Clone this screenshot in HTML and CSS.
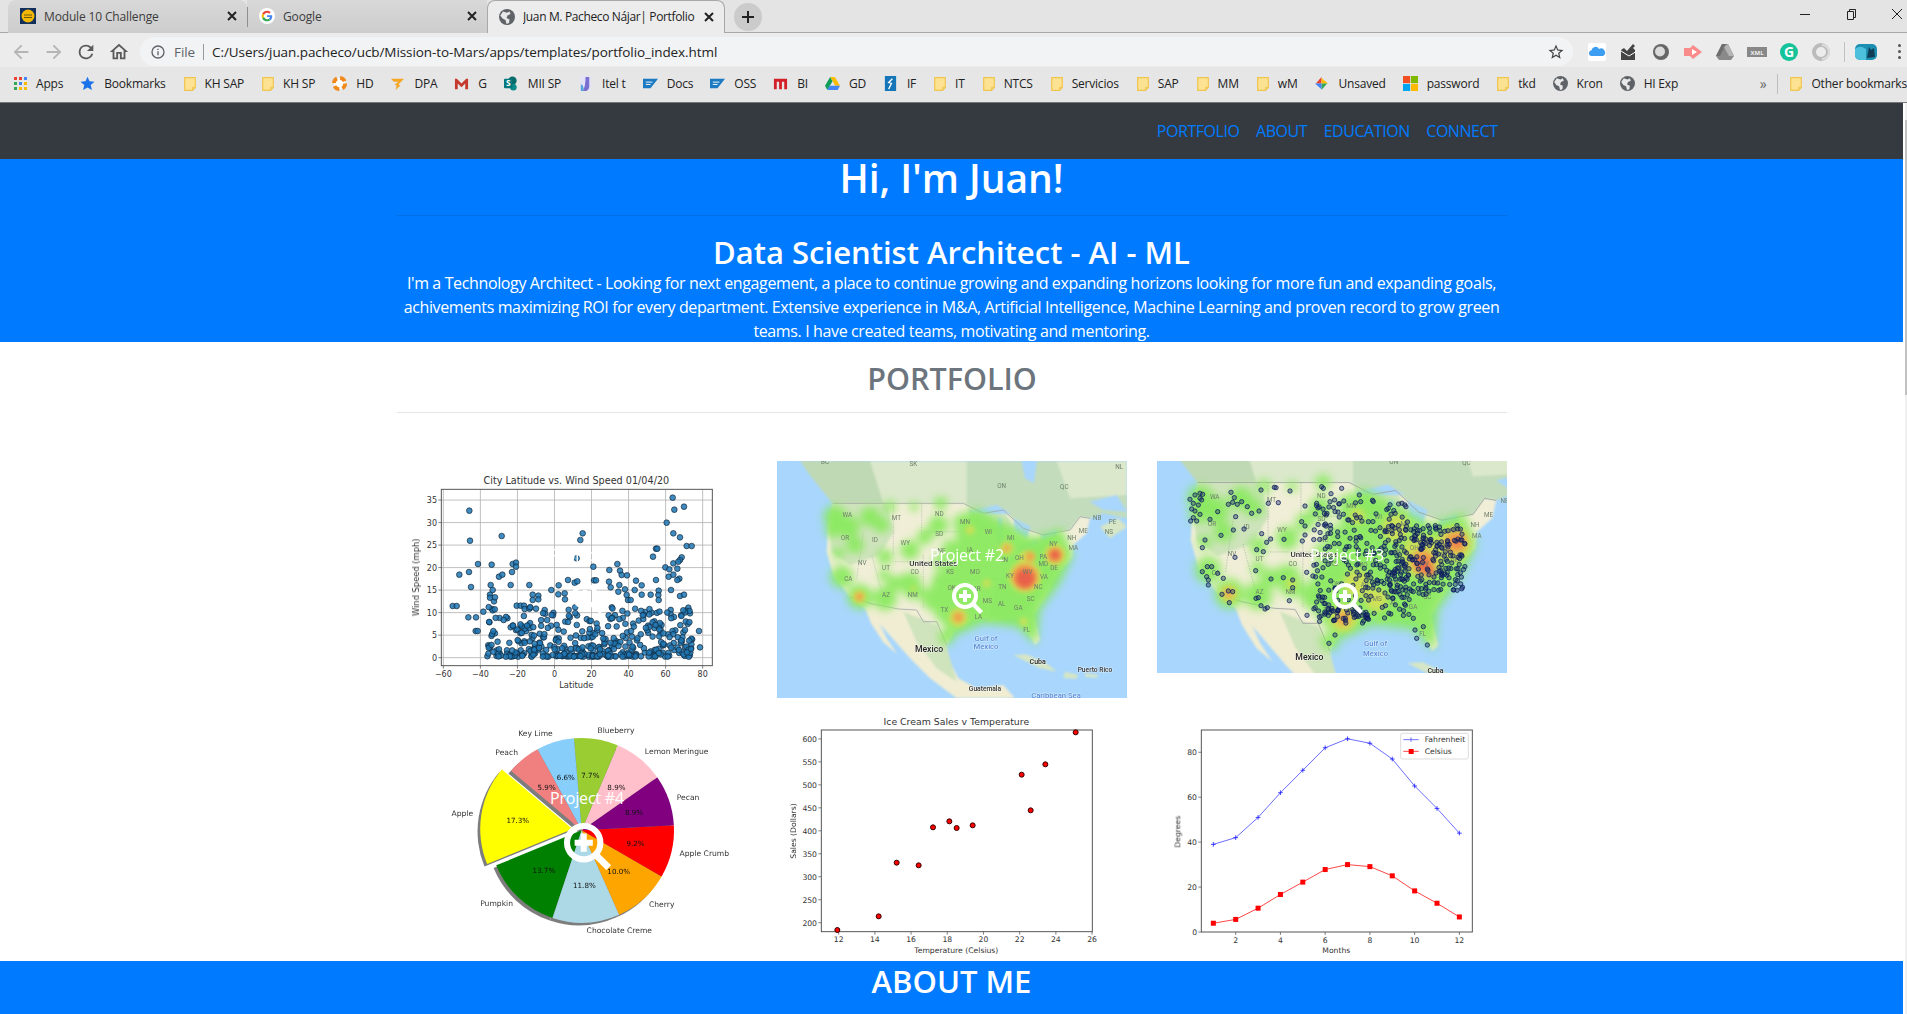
FILE: index.html
```html
<!DOCTYPE html>
<html lang="en">
<head>
  <meta charset="UTF-8">
  <title>Juan M. Pacheco Nájar| Portfolio</title>
  <link rel="stylesheet" href="styles.css">
</head>
<body>
  <svg class="sprites" aria-hidden="true">
    <symbol id="folder" viewBox="0 0 12 14"><path d="M.7.7h10.6v9.8L8.6 13.3H.7z" fill="#fde293" stroke="#f0c54f" stroke-width="1.2"/><path d="M8.6 13v-2.6h2.6" fill="none" stroke="#f0c54f"/></symbol>
    <symbol id="globe" viewBox="0 0 16 16"><circle cx="8" cy="8" r="8" fill="#5f6368"/><path d="M4 2.5l4 1.2 2.5-1.2 1 2.5-3 1.5-1 2.5 3 1.5-.5 3.5-2.5 1-1-4-3-1.5-2.2-3z" fill="#e8e8e8"/></symbol>
    <symbol id="close" viewBox="0 0 10 10"><path d="M1 1l8 8M9 1l-8 8" stroke="#222" stroke-width="2" fill="none"/></symbol>
    <symbol id="lens" viewBox="0 0 31 31"><circle cx="13" cy="13" r="11" fill="none" stroke="#fff" stroke-width="4"/><path d="M13 7v12M7 13h12" stroke="#fff" stroke-width="4" fill="none"/><path d="M21 21l8.5 8.5" stroke="#fff" stroke-width="4.4" fill="none"/></symbol>
  </svg>

  <div class="tabstrip">
    <div class="tab">
      <svg class="favicon" viewBox="0 0 16 16"><rect width="16" height="16" fill="#12305c"/><circle cx="8" cy="8" r="6.5" fill="#f2b705"/><path d="M4 7h8M4 9.5h8" stroke="#6b5a10"/></svg>
      <span class="tab-title">Module 10 Challenge</span>
      <svg class="tab-close"><use href="#close"/></svg>
    </div>
    <div class="tab tab-second">
      <svg class="favicon" viewBox="0 0 48 48"><circle cx="24" cy="24" r="24" fill="#fff"/><path fill="#ea4335" d="M24 14.5c2.6 0 4.7.9 6.4 2.5l4.7-4.7C32.2 9.6 28.500 8 24 8c-6.300 0-11.700 3.600-14.300 8.900l5.500 4.300c1.300-3.900 4.900-6.700 8.800-6.700z"/><path fill="#4285f4" d="M39.600 24.400c0-1.200-.1-2.100-.3-3H24v5.900h8.900c-.4 2.200-1.600 3.900-3.400 5.100l5.300 4.100c3.100-2.900 4.800-7.100 4.800-12.100z"/><path fill="#fbbc05" d="M15.200 27c-.3-1-.5-2-.5-3s.2-2 .5-3l-5.500-4.200C8.600 18.900 8 21.400 8 24s.6 5.100 1.700 7.200z"/><path fill="#34a853" d="M24 40c4.300 0 8-1.400 10.800-3.900l-5.300-4.100c-1.500 1-3.300 1.600-5.500 1.600-4 0-7.500-2.700-8.800-6.500l-5.500 4.200C12.300 36.500 17.700 40 24 40z"/></svg>
      <span class="tab-title">Google</span>
      <svg class="tab-close"><use href="#close"/></svg>
    </div>
    <div class="tab tab-active">
      <svg class="favicon"><use href="#globe"/></svg>
      <span class="tab-title">Juan M. Pacheco Nájar| Portfolio</span>
      <svg class="tab-close"><use href="#close"/></svg>
    </div>
    <div class="new-tab"><svg viewBox="0 0 12 12"><path d="M6 0v12M0 6h12" stroke="#222" stroke-width="2"/></svg></div>
    <div class="window-buttons">
      <svg viewBox="0 0 12 12"><path d="M1 6.500h10" stroke="#222"/></svg>
      <svg viewBox="0 0 12 12"><path d="M2.500 3.500h6v8h-6zM4.500 3.500V1.500h6v8H8.500" stroke="#222" fill="none"/></svg>
      <svg viewBox="0 0 12 12"><path d="M1 1l10 10M11 1L1 11" stroke="#222"/></svg>
    </div>
  </div>

  <div class="toolbar">
    <div class="nav-buttons">
      <svg class="off" viewBox="0 0 24 24"><path d="M20 11H7.830l5.590-5.590L12 4l-8 8 8 8 1.410-1.410L7.830 13H20z"/></svg>
      <svg class="off" viewBox="0 0 24 24"><path d="M12 4l-1.410 1.410L16.170 11H4v2h12.170l-5.580 5.590L12 20l8-8z"/></svg>
      <svg viewBox="0 0 24 24"><path d="M17.650 6.350A7.960 7.960 0 0012 4a8 8 0 100 16c3.730 0 6.840-2.550 7.730-6h-2.080A6 6 0 1112 6c1.660 0 3.140.690 4.220 1.780L13 11h7V4z"/></svg>
      <svg viewBox="0 0 24 24"><path d="M12 5.690l5 4.500V18h-2v-6H9v6H7v-7.810zM12 3L2 12h3v8h6v-6h2v6h6v-8h3z"/></svg>
    </div>
    <div class="omnibox">
      <svg class="info" viewBox="0 0 24 24"><path d="M11 7h2v2h-2zm0 4h2v6h-2zm1-9a10 10 0 100 20 10 10 0 000-20zm0 18a8 8 0 110-16 8 8 0 010 16z"/></svg>
      <span class="scheme">File</span>
      <span class="url">C:/Users/juan.pacheco/ucb/Mission-to-Mars/apps/templates/portfolio_index.html</span>
      <svg class="star" viewBox="0 0 24 24"><path d="M22 9.240l-7.190-.620L12 2 9.190 8.630 2 9.240l5.460 4.730L5.820 21 12 17.270 18.180 21l-1.630-7.030zM12 15.400l-3.760 2.270 1-4.280-3.320-2.880 4.380-.380L12 6.100l1.710 4.040 4.380.380-3.320 2.880 1 4.280z"/></svg>
    </div>
    <div class="extensions">
      <svg viewBox="0 0 20 20"><rect x="1" y="1" width="18" height="18" rx="2" fill="#fff"/><path d="M4 14a3 3 0 01.500-5.800 4 4 0 017.500-1.200 3.500 3.500 0 014 7z" fill="#3d9df0"/></svg>
      <svg viewBox="0 0 20 20"><path d="M2 8l3-2 3 3 6-7 2 2-2 2 2 2v10H2z" fill="#444"/><path d="M2 9l8 5 8-5" stroke="#fff" fill="none"/></svg>
      <svg viewBox="0 0 20 20"><circle cx="10" cy="10" r="8" fill="#666"/><circle cx="9" cy="9.500" r="5" fill="#dcdcdc"/></svg>
      <svg viewBox="0 0 20 20"><path d="M1 6h6l3-3 9 7-9 7-3-3H1z" fill="#f98b8b"/><path d="M9 7l5 3-5 3z" fill="#fff"/></svg>
      <svg viewBox="0 0 20 20"><path d="M7 2h6l6 12-3 4H4l-3-4z" fill="#8a8a8a"/><path d="M7 2h4l-6 12H1z" fill="#6e6e6e"/><path d="M13 2l6 12h-5L9 5z" fill="#b5b5b5"/></svg>
      <svg viewBox="0 0 20 20"><rect y="5" width="20" height="10" fill="#888"/><text x="10" y="12.500" class="ext-text">XML</text></svg>
      <svg viewBox="0 0 20 20"><circle cx="10" cy="10" r="9" fill="#15c39a"/><text x="10" y="15" class="ext-g">G</text></svg>
      <svg viewBox="0 0 20 20"><circle cx="10" cy="10" r="7" fill="none" stroke="#bbb" stroke-width="4"/><path d="M11 3a7 7 0 010 14" fill="none" stroke="#ddd" stroke-width="2"/></svg>
      <i class="toolbar-sep"></i>
      <svg class="avatar" viewBox="0 0 22 16"><rect width="22" height="16" rx="5" fill="#1c8fb0"/><path d="M0 5c5-4 8-2 11 0v11H5a5 5 0 01-5-5z" fill="#4cc0dd"/><path d="M14 3l2 3 3-2 1 9-8 1z" fill="#103c55"/></svg>
      <div class="dots"><i></i><i></i><i></i></div>
    </div>
  </div>

  <div class="bookmarks">
    <a class="bm"><svg class="apps" viewBox="0 0 13 13"><path fill="#ea4335" d="M0 0h3v3H0zM5 0h3v3H5z"/><path fill="#4285f4" d="M10 0h3v3h-3zM5 5h3v3H5z"/><path fill="#34a853" d="M0 5h3v3H0zM0 10h3v3H0z"/><path fill="#fbbc05" d="M10 5h3v3h-3zM5 10h3v3H5zM10 10h3v3h-3z"/></svg>Apps</a>
    <a class="bm"><svg viewBox="0 0 24 24"><path fill="#1a73e8" d="M12 1l3.200 7.500 8 .7-6 5.300 1.800 8L12 18.300 5 22.500l1.800-8-6-5.300 8-.7z"/></svg>Bookmarks</a>
    <a class="bm"><svg class="fold"><use href="#folder"/></svg>KH SAP</a>
    <a class="bm"><svg class="fold"><use href="#folder"/></svg>KH SP</a>
    <a class="bm"><svg viewBox="0 0 16 16"><circle cx="8" cy="8" r="6" fill="#fff" stroke="#f08a1d" stroke-width="4" stroke-dasharray="6 3.400"/></svg>HD</a>
    <a class="bm"><svg viewBox="0 0 16 16"><path d="M1 3h14L9 9l2 1-5 5 1-5-2-1 4-3H4z" fill="#f5a623"/></svg>DPA</a>
    <a class="bm"><svg viewBox="0 0 16 16"><path d="M1 14V3h2l5 5 5-5h2v11h-3V8L8 12 4 8v6z" fill="#c5392c"/></svg>G</a>
    <a class="bm"><svg viewBox="0 0 16 16"><circle cx="9" cy="5" r="4.500" fill="#0b6a6a"/><circle cx="10" cy="12" r="3.500" fill="#0e8a8a"/><rect y="3" width="9" height="10" rx="1" fill="#03787c"/><text x="4.500" y="11" class="ext-s">S</text></svg>MII SP</a>
    <a class="bm"><svg viewBox="0 0 16 16"><rect x="2" width="12" height="16" fill="#e4e2f4"/><path d="M8 1h4v10c0 2-1 4-3 5H4c3-2 4-7 4-15z" fill="#7a6fd0"/><path d="M3 9c2 0 3 2 3 7H3z" fill="#57a5dd"/></svg>Itel t</a>
    <a class="bm"><svg viewBox="0 0 16 10"><path d="M0 0h16L8 10H0z" fill="#1b7ac2"/><path d="M3 3.500h7M3 6h5" stroke="#fff"/></svg>Docs</a>
    <a class="bm"><svg viewBox="0 0 16 10"><path d="M0 0h16L8 10H0z" fill="#1b7ac2"/><path d="M3 3.500h7M3 6h5" stroke="#fff"/></svg>OSS</a>
    <a class="bm"><svg viewBox="0 0 16 16"><path d="M1 14V3h14v11h-3V6H9.500v8h-3V6H4v8z" fill="#d22128"/></svg>BI</a>
    <a class="bm"><svg viewBox="0 0 16 16"><path d="M5.500 1h5L16 10.500h-5z" fill="#fbbc05"/><path d="M5.500 1L0 10.500 2.500 15 8 5.500z" fill="#0f9d58"/><path d="M2.500 15h11l2.500-4.500H5z" fill="#4285f4"/></svg>GD</a>
    <a class="bm"><svg viewBox="0 0 16 16"><rect x="2" width="12" height="16" fill="#1476b8"/><path d="M10 3L6 7l3 1-3 6" stroke="#fff" fill="none" stroke-width="1.400"/></svg>IF</a>
    <a class="bm"><svg class="fold"><use href="#folder"/></svg>IT</a>
    <a class="bm"><svg class="fold"><use href="#folder"/></svg>NTCS</a>
    <a class="bm"><svg class="fold"><use href="#folder"/></svg>Servicios</a>
    <a class="bm"><svg class="fold"><use href="#folder"/></svg>SAP</a>
    <a class="bm"><svg class="fold"><use href="#folder"/></svg>MM</a>
    <a class="bm"><svg class="fold"><use href="#folder"/></svg>wM</a>
    <a class="bm"><svg viewBox="0 0 16 16"><path d="M8 1v7H2z" fill="#ea4335"/><path d="M15 8H8V2z" fill="#fbbc05"/><path d="M8 15V8h6z" fill="#34a853"/><path d="M1 8h7v6z" fill="#4285f4"/></svg>Unsaved</a>
    <a class="bm"><svg viewBox="0 0 16 16"><path fill="#f25022" d="M0 0h7.600v7.600H0z"/><path fill="#7fba00" d="M8.400 0H16v7.600H8.400z"/><path fill="#00a4ef" d="M0 8.400h7.600V16H0z"/><path fill="#ffb900" d="M8.400 8.400H16V16H8.400z"/></svg>password</a>
    <a class="bm"><svg class="fold"><use href="#folder"/></svg>tkd</a>
    <a class="bm"><svg><use href="#globe"/></svg>Kron</a>
    <a class="bm"><svg><use href="#globe"/></svg>HI Exp</a>
    <span class="bm-more">»</span>
    <i class="bm-sep"></i>
    <a class="bm bm-other"><svg class="fold"><use href="#folder"/></svg>Other bookmarks</a>
  </div>

  <div class="viewport">
    <main class="page">
      <nav class="navbar">
        <div class="container nav-links">
          <a href="#portfolio">PORTFOLIO</a>
          <a href="#about">ABOUT</a>
          <a href="#education">EDUCATION</a>
          <a href="#connect">CONNECT</a>
        </div>
      </nav>

      <header class="hero">
        <div class="container">
          <h1>Hi, I'm Juan!</h1>
          <hr class="hr-dark">
          <h2>Data Scientist Architect - AI - ML</h2>
          <p>I'm a Technology Architect - Looking for next engagement, a place to continue growing and expanding horizons looking for more fun and expanding goals, achivements maximizing ROI for every department. Extensive experience in M&amp;A, Artificial Intelligence, Machine Learning and proven record to grow green teams. I have created teams, motivating and mentoring.</p>
        </div>
      </header>

      <section class="portfolio" id="portfolio">
        <div class="container">
          <h2>PORTFOLIO</h2>
          <hr>
          <div class="grid">
            <div class="project row-one"><div class="shot" id="chart-wind"></div><div class="overlay"><p>Project #1</p><svg><use href="#lens"/></svg></div></div>
            <div class="project row-one"><div class="shot" id="map-heat"></div><div class="overlay"><p>Project #2</p><svg><use href="#lens"/></svg></div></div>
            <div class="project row-one"><div class="shot" id="map-dots"></div><div class="overlay"><p>Project #3</p><svg><use href="#lens"/></svg></div></div>
            <div class="project row-two"><div class="shot" id="chart-pie"></div><div class="overlay"><p>Project #4</p><svg><use href="#lens"/></svg></div></div>
            <div class="project"><div class="shot" id="chart-sales"></div></div>
            <div class="project"><div class="shot" id="chart-temp"></div></div>
          </div>
        </div>
      </section>

      <section class="about" id="about">
        <h2>ABOUT ME</h2>
      </section>
    </main>
    <div class="scrollbar"><i></i></div>
  </div>

  <script src="charts.js"></script>
</body>
</html>
```

FILE: styles.css
```css
* {
  box-sizing: border-box;
}
html, body {
  height: 100%;
}
body {
  margin: 0;
  overflow: hidden;
  font-family: "Open Sans", "Noto Sans", sans-serif;
  font-size: 16px;
  background-color: #fff;
  color: #212529;
}
.sprites {
  display: none;
}

/* browser chrome */
.tabstrip {
  display: flex;
  height: 33px;
  padding-left: 8px;
  background-color: #e4e4e4;
  border-bottom: 1px solid #a8a8a8;
  font-size: 12px;
  letter-spacing: -.15px;
}
.tab {
  display: flex;
  align-items: center;
  width: 239px;
  height: 33px;
  padding: 0 10px 1px 12px;
  background: linear-gradient(#d8d8d8, #cdcdcd);
  border-radius: 8px 8px 0 0;
  color: #3c3c3c;
}
.tab-second {
  width: 240px;
  border-left: 1px solid #8f8f8f;
  border-image: linear-gradient(transparent 8px, #8f8f8f 8px, #8f8f8f 26px, transparent 26px) 1;
  border-radius: 0;
}
.tab-active {
  width: 238px;
  padding-left: 11px;
  background: #ececec;
  border: 1px solid #a8a8a8;
  border-bottom: none;
  color: #222;
  letter-spacing: -.36px;
}
.favicon {
  flex: none;
  width: 16px;
  height: 16px;
  margin-right: 8px;
}
.tab-second .favicon {
  margin-left: -1px;
}
.tab-title {
  flex: 1;
  white-space: nowrap;
  overflow: hidden;
}
.tab-close {
  flex: none;
  width: 10px;
  height: 10px;
}
.new-tab {
  display: flex;
  align-items: center;
  justify-content: center;
  width: 28px;
  height: 28px;
  margin: 3px 0 0 9px;
  background-color: #cbcbcb;
  border-radius: 50%;
}
.new-tab svg {
  width: 12px;
  height: 12px;
}
.window-buttons {
  display: flex;
  gap: 34px;
  margin: 8px 4px 0 auto;
}
.window-buttons svg {
  width: 12px;
  height: 12px;
}

.toolbar {
  display: flex;
  align-items: center;
  height: 34px;
  padding-top: 3px;
  background-color: #ececec;
}
.nav-buttons {
  display: flex;
  flex: none;
  width: 140px;
  padding-left: 10px;
  gap: 10.500px;
}
.nav-buttons svg {
  width: 22px;
  height: 22px;
  fill: #5a5a5a;
}
.nav-buttons .off {
  fill: #b4b4b4;
}
.omnibox {
  display: flex;
  flex: 1;
  align-items: center;
  height: 29px;
  padding: 0 8px 0 10px;
  background-color: #f1f3f4;
  border-radius: 15px;
  font-size: 13.500px;
  letter-spacing: -.08px;
}
.info {
  width: 16px;
  height: 16px;
  margin-right: 8px;
  fill: #5f6368;
}
.scheme {
  padding-right: 8px;
  border-right: 1px solid #9a9a9a;
  color: #5f6368;
  line-height: 16px;
}
.url {
  flex: 1;
  padding-left: 8px;
  color: #222;
  white-space: nowrap;
}
.star {
  width: 18px;
  height: 18px;
  fill: #444;
}
.extensions {
  display: flex;
  flex: none;
  align-items: center;
  width: 334px;
  padding-left: 14px;
  gap: 12px;
}
.extensions > svg {
  width: 20px;
  height: 20px;
}
.ext-text {
  font-size: 6px;
  font-weight: 700;
  fill: #eee;
  text-anchor: middle;
}
.ext-g {
  font-size: 14px;
  font-weight: 700;
  fill: #fff;
  text-anchor: middle;
}
.ext-s {
  font-size: 9px;
  font-weight: 700;
  fill: #fff;
  text-anchor: middle;
}
.toolbar-sep {
  width: 1px;
  height: 20px;
  margin-left: 1px;
  background-color: #c2c2c2;
}
.extensions > .avatar {
  width: 22px;
  height: 16px;
  margin-left: -2px;
}
.dots {
  display: flex;
  flex-direction: column;
  gap: 3px;
  margin-left: 9px;
}
.dots i {
  width: 3px;
  height: 3px;
  background-color: #555;
  border-radius: 50%;
}

.bookmarks {
  display: flex;
  align-items: center;
  height: 36px;
  padding: 0 0 2px 14px;
  background-color: #e6e6e6;
  border-bottom: 1px solid #777;
  font-size: 12px;
  letter-spacing: -.2px;
  color: #222;
  white-space: nowrap;
  overflow: hidden;
}
.bm {
  display: flex;
  flex: none;
  align-items: center;
  gap: 9px;
  margin-right: 17px;
}
.bm svg {
  width: 15px;
  height: 15px;
}
.bm .fold {
  width: 12px;
  height: 14px;
  margin-left: 1px;
}
.bm .apps {
  width: 13px;
  height: 13px;
}
.bm-more {
  margin-left: auto;
  color: #666;
  font-size: 14px;
}
.bm-sep {
  width: 1px;
  height: 20px;
  margin: 0 11px 0 11px;
  background-color: #bdbdbd;
}
.bm-other {
  margin-right: 0;
}

/* page */
.viewport {
  display: flex;
}
.page {
  flex: none;
  width: 1904px;
}
.scrollbar {
  flex: 1;
  margin-left: 1px;
  background-color: #f1f1f1;
  height: 911px;
}
.scrollbar i {
  display: block;
  height: 275px;
  margin-top: 17px;
  background-color: #c1c1c1;
}
.container {
  width: 1110px;
  margin: 0 auto;
}
.navbar {
  height: 56px;
  margin-right: 1px;
  background-color: #343a40;
}
.nav-links {
  display: flex;
  align-items: center;
  justify-content: flex-end;
  height: 100%;
  padding-right: 9px;
  gap: 16.500px;
}
.nav-links a {
  color: #007bff;
  text-decoration: none;
  letter-spacing: -.45px;
}
.hero {
  height: 183px;
  margin-right: 1px;
  background-color: #007bff;
  color: #fff;
  text-align: center;
}
.hero h1 {
  margin: 0 0 8px;
  font-size: 39px;
  font-weight: 600;
  line-height: 37px;
  height: 48px;
}
hr {
  margin: 15px 0 0;
  border: none;
  border-top: 1px solid rgba(0, 0, 0, .1);
}
.hr-dark {
  margin: 0;
}
.hero h2 {
  margin: 18px 0 0;
  font-size: 31px;
  font-weight: 600;
  line-height: 37px;
}
.hero p {
  margin: 0;
  letter-spacing: -.37px;
  line-height: 24px;
}
.portfolio h2 {
  margin: 0;
  padding-top: 17px;
  font-size: 30.500px;
  font-weight: 600;
  line-height: 38px;
  color: #6c757d;
  text-align: center;
}
.grid {
  display: grid;
  grid-template-columns: repeat(3, 350px);
  grid-template-rows: 237px 263px;
  column-gap: 30px;
  align-items: start;
  margin-top: 48px;
}
.project {
  position: relative;
}
.shot svg {
  display: block;
  width: 350px;
  height: auto;
  filter: blur(.35px);
}
.overlay {
  position: absolute;
  left: 0;
  width: 380px;
  color: #fff;
  text-align: center;
  line-height: 24px;
}
.overlay p {
  margin: 0;
  letter-spacing: -.2px;
}
.overlay svg {
  display: block;
  margin-left: auto;
  margin-right: auto;
}
.row-one .overlay {
  top: 82px;
}
.row-one .overlay svg {
  width: 31px;
  height: 31px;
  margin-top: 16px;
}
.row-two .overlay {
  top: 88px;
}
.row-two .overlay svg {
  width: 47px;
  height: 47px;
  margin-top: 13px;
}
.about {
  margin-right: 1px;
  height: 60px;
  padding-top: 1px;
  background-color: #007bff;
}
.about h2 {
  margin: 0;
  font-size: 31px;
  font-weight: 600;
  line-height: 38px;
  color: #fff;
  text-align: center;
}

/* matplotlib charts */
.mpl text {
  font-family: "DejaVu Sans", sans-serif;
  fill: #333;
}
.gmap text {
  font-family: Roboto, sans-serif;
  text-anchor: middle;
}
.gmap .place {
  font-weight: 500;
}
```

FILE: charts.js
```js
// small seeded generator so the dense clouds come out the same on every load
function seeded(s) {
  return () => (s = (s * 16807) % 2147483647) / 2147483647;
}

function svgOpen(cls, viewBox) {
  return `<svg xmlns="http://www.w3.org/2000/svg" class="${cls}" viewBox="${viewBox}">`;
}

function axes(box, xTicks, yTicks, opts) {
  let [l, t, r, b] = box, out = '';
  let size = opts.tickSize;
  if (opts.grid) {
    xTicks.forEach(([x]) => out += `<path d="M${x} ${t}V${b}" stroke="#b0b0b0" stroke-width="2.400"/>`);
    yTicks.forEach(([y]) => out += `<path d="M${l} ${y}H${r}" stroke="#b0b0b0" stroke-width="2.400"/>`);
  }
  xTicks.forEach(([x, label]) => {
    out += `<path d="M${x} ${b}v9" stroke="#444" stroke-width="2"/>`;
    out += `<text x="${x}" y="${b + 9 + size}" font-size="${size}" text-anchor="middle">${label}</text>`;
  });
  yTicks.forEach(([y, label]) => {
    out += `<path d="M${l} ${y}h-9" stroke="#444" stroke-width="2"/>`;
    out += `<text x="${l - 13}" y="${y + size * .37}" font-size="${size}" text-anchor="end">${label}</text>`;
  });
  return out;
}

function frame(box) {
  let [l, t, r, b] = box;
  return `<rect x="${l}" y="${t}" width="${r - l}" height="${b - t}" fill="none" stroke="#555" stroke-width="3"/>`;
}

function drawWind() {
  const box = [124, 88, 937, 617];
  const xTicks = [];
  for (let v = -60; v <= 80; v += 20) xTicks.push([130 + (v + 60) * 5.557, String(v).replace('-', '−')]);
  const yTicks = [];
  for (let v = 0; v <= 35; v += 5) yTicks.push([593 - v * 13.51, v]);

  // points read off the plot, outliers first
  const pts = [[208,152],[210,242],[207,336],[213,381],[205,472],[234,312],[178,344],[158,438],[170,438],[228,472],[227,513],[233,513],[250,455],[305,228],[275,314],[338,312],[348,308],[348,320],[336,336],[297,350],[307,344],[272,375],[332,375],[388,375],[278,390],[270,404],[270,413],[282,424],[285,412],[276,447],[278,451],[398,404],[415,407],[415,418],[398,420],[350,437],[362,437],[372,437],[374,447],[408,446],[434,450],[476,376],[454,390],[475,403],[494,400],[495,418],[504,360],[524,368],[532,364],[530,295],[541,240],[548,220],[580,320],[582,361],[588,361],[628,330],[652,312],[660,332],[665,345],[681,346],[708,362],[627,365],[632,382],[658,375],[655,395],[675,388],[680,405],[684,420],[692,420],[725,376],[725,404],[704,390],[752,404],[759,290],[768,266],[772,266],[768,360],[776,392],[775,405],[776,420],[796,322],[800,188],[818,113],[823,149],[852,140],[820,220],[840,232],[845,292],[840,300],[860,258],[875,258],[820,310],[835,305],[832,326],[808,328],[806,350],[820,344],[838,356],[832,360],[813,390],[840,408],[852,404],[865,443],[858,452],[870,460],[863,492],[897,513],[900,562],[850,517],[855,510]];
  const rnd = seeded(20200104);
  for (let i = 0; i < 400; i++) {
    let y = rnd();
    pts.push([262 + rnd() * 618, 590 - y * y * 150]);
  }

  let out = svgOpen('mpl', '-9 3 1050 690');
  out += '<rect x="-9" y="3" width="1050" height="690" fill="#fff"/>';
  out += axes(box, xTicks, yTicks, {grid: true, tickSize: 24});
  pts.forEach(([x, y]) => out += `<circle cx="${x}" cy="${y}" r="8.500" fill="#1f77b4" fill-opacity=".85" stroke="#123" stroke-width="2"/>`);
  out += frame(box);
  out += '<text x="529" y="72" font-size="29" text-anchor="middle">City Latitude vs. Wind Speed 01/04/20</text>';
  out += '<text x="529" y="684" font-size="25" text-anchor="middle">Latitude</text>';
  out += '<text transform="translate(57 352) rotate(-90)" font-size="25" text-anchor="middle">Wind Speed (mph)</text>';
  document.getElementById('chart-wind').innerHTML = out + '</svg>';
}

function drawSales() {
  const box = [124, 60, 937, 665];
  const xTicks = [];
  for (let v = 12; v <= 26; v += 2) xTicks.push([176 + (v - 12) * 54.3, v]);
  const yTicks = [];
  for (let v = 200; v <= 600; v += 50) yTicks.push([638 - (v - 200) * 1.378, v]);
  const pts = [[172,660],[296,619],[350,458],[416,466],[459,352],[508,334],[530,354],[578,346],[725,194],[752,301],[796,163],[887,67]];

  let out = svgOpen('mpl', '-9 -36 1050 786');
  out += '<rect x="-9" y="-36" width="1050" height="786" fill="#fff"/>';
  out += axes(box, xTicks, yTicks, {tickSize: 23});
  out += frame(box);
  pts.forEach(([x, y]) => out += `<circle cx="${x}" cy="${y}" r="7.500" fill="#f00" stroke="#300" stroke-width="3"/>`);
  out += '<text x="529" y="44" font-size="28" text-anchor="middle">Ice Cream Sales v Temperature</text>';
  out += '<text x="529" y="730" font-size="23" text-anchor="middle">Temperature (Celsius)</text>';
  out += '<text transform="translate(48 363) rotate(-90)" font-size="23" text-anchor="middle">Sales (Dollars)</text>';
  document.getElementById('chart-sales').innerHTML = out + '</svg>';
}

function drawTemp() {
  const box = [124, 45, 937, 651];
  const fahrenheit = [39, 42, 51, 62, 72, 82, 86, 84, 77, 65, 55, 44];
  const celsius = [3.9, 5.6, 10.6, 16.7, 22.2, 27.8, 30, 29.1, 25, 18.3, 12.8, 6.7];
  const px = m => 160 + (m - 1) * 67.1;
  const py = v => 651 - v * 6.74;
  const xTicks = [2, 4, 6, 8, 10, 12].map(m => [px(m), m]);
  const yTicks = [0, 20, 40, 60, 80].map(v => [py(v), v]);

  let out = svgOpen('mpl', '-9 -51 1050 786');
  out += '<rect x="-9" y="-51" width="1050" height="786" fill="#fff"/>';
  out += axes(box, xTicks, yTicks, {tickSize: 23});
  out += frame(box);
  out += `<polyline points="${fahrenheit.map((v, i) => px(i + 1) + ',' + py(v)).join(' ')}" fill="none" stroke="#22f" stroke-opacity=".8" stroke-width="2.500"/>`;
  fahrenheit.forEach((v, i) => {
    let x = px(i + 1), y = py(v);
    out += `<path d="M${x - 7} ${y}h14M${x} ${y - 7}v14" stroke="#22f" stroke-width="2.500"/>`;
  });
  out += `<polyline points="${celsius.map((v, i) => px(i + 1) + ',' + py(v)).join(' ')}" fill="none" stroke="#f22" stroke-width="2.500"/>`;
  celsius.forEach((v, i) => out += `<rect x="${px(i + 1) - 7.500}" y="${py(v) - 7.500}" width="15" height="15" fill="#f00"/>`);
  // legend
  out += '<rect x="722" y="55" width="203" height="77" rx="5" fill="#fff" fill-opacity=".9" stroke="#ccc" stroke-width="2"/>';
  out += '<path d="M730 74h46M753 67v14" stroke="#55f" stroke-width="2.500"/>';
  out += '<path d="M730 109h46" stroke="#f22" stroke-width="2.500"/><rect x="746" y="102" width="15" height="15" fill="#f00"/>';
  out += '<text x="794" y="81" font-size="23">Fahrenheit</text><text x="794" y="116" font-size="23">Celsius</text>';
  out += '<text x="529" y="715" font-size="23" text-anchor="middle">Months</text>';
  out += '<text transform="translate(61 350) rotate(-90)" font-size="23" text-anchor="middle">Degrees</text>';
  document.getElementById('chart-temp').innerHTML = out + '</svg>';
}

function drawPie() {
  const slices = [
    ['Apple', 17.3, 'yellow', 62.3], ['Pumpkin', 13.7, 'green', 49.3], ['Chocolate Creme', 11.8, 'lightblue', 42.4],
    ['Cherry', 10.0, 'orange', 36], ['Apple Crumb', 9.2, 'red', 33.1], ['Pecan', 8.9, 'purple', 32],
    ['Lemon Meringue', 8.9, 'pink', 32], ['Blueberry', 7.7, 'yellowgreen', 27.7], ['Key Lime', 6.6, 'lightskyblue', 23.8],
    ['Peach', 5.9, 'lightcoral', 21.3]
  ];
  const cx = 395, cy = 346, r = 277, rad = Math.PI / 180;
  const wedge = (x, y, a0, a1, fill) => {
    let p0 = [x + r * Math.cos(a0 * rad), y - r * Math.sin(a0 * rad)];
    let p1 = [x + r * Math.cos(a1 * rad), y - r * Math.sin(a1 * rad)];
    return `<path d="M${x} ${y}L${p0}A${r} ${r} 0 0 0 ${p1}Z" fill="${fill}"/>`;
  };
  let shadows = '', wedges = '', labels = '', angle = 140;
  slices.forEach(([name, pct, color, sweep], i) => {
    let mid = (angle + sweep / 2) * rad;
    let off = i === 0 ? r * .1 : 0;
    let x = cx + off * Math.cos(mid), y = cy - off * Math.sin(mid);
    shadows += wedge(x - 8, y + 8, angle, angle + sweep, '#7d7d7d');
    wedges += wedge(x, y, angle, angle + sweep, color);
    let tx = x + r * .6 * Math.cos(mid), ty = y - r * .6 * Math.sin(mid);
    labels += `<text x="${tx}" y="${ty + 7}" font-size="21.500" text-anchor="middle" style="fill:#111">${pct.toFixed(1)}%</text>`;
    let lx = x + r * 1.09 * Math.cos(mid), ly = y - r * 1.09 * Math.sin(mid);
    labels += `<text x="${lx}" y="${ly + 7}" font-size="22.800" text-anchor="${Math.cos(mid) < 0 ? 'end' : 'start'}">${name}</text>`;
    angle += sweep;
  });
  let out = svgOpen('mpl', '-159 -51 1050 786');
  out += '<rect x="-159" y="-51" width="1050" height="786" fill="#fff"/>';
  document.getElementById('chart-pie').innerHTML = out + shadows + wedges + labels + '</svg>';
}

// land shapes, in the coordinates of the first map; the second one is a closer crop
const CANADA = '40,18 90,18 120,60 160,110 188,145 580,145 640,175 700,165 760,220 820,240 900,225 930,185 960,190 1000,175 1071,190 1071,18';
const PRAIRIES = ['300,18 590,18 590,145 330,145', '860,18 1071,18 1071,120 900,130'];
const ROCKIES = ['95,18 300,18 340,145 188,145 120,60'];
const USA = '188,145 580,145 640,175 700,165 760,220 820,240 900,225 930,185 960,190 950,235 910,270 905,310 860,360 830,420 790,480 810,555 795,570 750,490 680,485 610,495 555,525 530,570 500,500 460,500 440,465 385,462 300,445 240,425 190,360 170,290 175,210';
const MEXICO = '240,425 300,445 385,462 440,465 460,500 500,500 530,570 540,620 565,670 620,700 700,690 735,730 560,730 480,670 420,610 350,530 290,465';
const BAJA = '285,460 312,472 350,550 382,598 340,562 303,505';
const FOREST = ['188,145 350,145 372,230 330,300 240,330 185,290 175,210', '590,145 640,175 700,165 740,230 690,240 610,220', '650,500 680,400 760,260 860,240 840,350 770,470 720,490', '400,470 500,510 530,575 560,680 500,640 440,560'];
const LAKES = ['590,170 680,150 722,176 650,178', '682,190 696,190 702,272 682,272', '730,190 782,215 770,252 735,232', '742,282 800,255 806,266 752,296', '812,240 860,225 862,240 816,256', '755,18 800,18 792,85 765,70', '960,140 1040,120 1071,170 1000,165'];
const ISLANDS = ['730,600 770,598 830,625 860,650 810,640', '885,650 925,660 918,672 880,668', '945,655 985,660 980,668 945,665', '990,215 1045,190 1071,215 1020,250'];
const STATE_LINES = 'M370,145V300M455,145V240M570,230H460M575,320H370M305,300L345,445M460,300V460M280,235L260,370M625,330L720,345M575,230V345M500,375H680M720,260L730,370M800,370H640M680,440L690,480M740,395L770,460';
const SMALL_LABELS = [['WA',232,187],['OR',225,255],['ID',315,262],['MT',379,195],['WY',406,270],['ND',508,184],['SD',508,243],['MN',585,208],['WI',655,238],['MI',722,255],['IA',600,290],['NE',515,295],['IN',705,322],['OH',748,316],['PA',820,311],['NY',850,272],['ME',940,233],['NH',905,256],['MA',910,284],['NB',982,196],['NS',1017,238],['PE',1028,208],['ON',695,98],['QC',883,102],['NL',1048,42],['NV',277,331],['UT',348,344],['CO',434,356],['KS',540,356],['MO',615,358],['KY',720,368],['WV',773,356],['VA',822,373],['MD',820,333],['DE',852,346],['NC',805,403],['TN',697,403],['AR',620,408],['OK',545,406],['TX',523,472],['LA',625,491],['MS',652,443],['AL',695,453],['GA',745,464],['SC',782,438],['FL',770,531],['CA',235,377],['AZ',348,426],['NM',428,426],['SK',430,33],['BC',165,28]];
const GREEN_BLOBS = [[195,185,34],[190,225,24],[235,215,34],[300,185,30],[335,210,24],[255,270,26],[205,295,18],[360,155,18],[432,155,14],[512,145,20],[505,210,30],[465,245,24],[345,305,24],[342,360,18],[420,285,30],[215,365,34],[270,425,38],[345,430,36],[375,385,24],[420,385,34],[430,405,30],[490,430,36],[520,380,36],[530,545,24],[540,280,26],[510,320,22],[600,330,40]];
const GREEN_AREA = '550,185 620,160 700,200 790,250 875,220 910,300 870,385 810,465 800,570 740,515 640,505 560,540 505,495 470,440 530,330 560,260';

function polys(list, fill) {
  return list.map(p => `<polygon points="${p}" fill="${fill}"/>`).join('');
}

function blobs(list, fill) {
  return list.map(([x, y, r]) => `<circle cx="${x}" cy="${y}" r="${r}" fill="${fill}"/>`).join('');
}

function baseMap(matrix, clipH, heat) {
  const id = 'f' + clipH;
  const place = (x, y) => [matrix[0] * x + matrix[2], matrix[1] * y + matrix[3]];
  const T = `transform="matrix(${matrix[0]} 0 0 ${matrix[1]} ${matrix[2]} ${matrix[3]})"`;
  let out = `<defs>
    <filter id="${id}a" x="-20%" y="-20%" width="140%" height="140%"><feGaussianBlur stdDeviation="3"/></filter>
    <filter id="${id}b" x="-20%" y="-20%" width="140%" height="140%"><feGaussianBlur stdDeviation="12"/></filter>
    <filter id="${id}c" x="-20%" y="-20%" width="140%" height="140%"><feGaussianBlur stdDeviation="8"/></filter>
    <clipPath id="${id}clip"><rect x="21" y="18" width="1050" height="${clipH}"/></clipPath></defs>`;
  out += `<g clip-path="url(#${id}clip)"><rect x="21" y="18" width="1050" height="${clipH}" fill="#a8d6fc"/>`;
  out += `<g ${T}><g filter="url(#${id}a)">`;
  out += polys([CANADA], '#c2dcbc') + polys(PRAIRIES, '#dbe8cc') + polys(ROCKIES, '#bfd9b4');
  out += polys([USA], '#f1eed8') + polys([MEXICO, BAJA], '#f0edd3');
  out += polys(FOREST, '#cfe3bd') + polys(LAKES, '#a8d6fc') + polys(ISLANDS, '#d6e6c6');
  out += '</g>';
  out += `<path d="${STATE_LINES}" fill="none" stroke="#aaa" stroke-width="1.500" stroke-dasharray="4 3"/>`;
  out += '<path d="M188,145H580L640,175L700,165L760,220L820,240L900,225L930,185L960,190M240,425L300,445L385,462L440,465L460,500L500,500L530,570" fill="none" stroke="#9a9a9a" stroke-width="2"/>';
  // heat layers, widest and coolest first
  out += `<g filter="url(#${id}b)" opacity=".9">${blobs(GREEN_BLOBS, '#86ea5a')}${polys([GREEN_AREA], '#86ea5a')}</g>`;
  out += `<g filter="url(#${id}c)" opacity=".75">${blobs(heat.yellow, '#e2dd52')}</g>`;
  out += `<g filter="url(#${id}c)">${blobs(heat.orange, '#f0a24a')}</g>`;
  out += `<g filter="url(#${id}c)">${blobs(heat.red, '#e8604a')}</g>`;
  out += '</g><g>';
  SMALL_LABELS.forEach(([t, x, y]) => {
    let [px, py] = place(x, y);
    out += `<text x="${px}" y="${py}" font-size="19" fill="#6f7f6a">${t}</text>`;
  });
  const big = [['United States',490,332,24,'#333'],['Mexico',477,592,26,'#222'],['Cuba',803,626,21,'#222'],['Puerto Rico',975,650,20,'#333'],['Guatemala',645,709,20,'#333'],['Gulf of',648,558,23,'#5a8cd8'],['Mexico',648,582,23,'#5a8cd8'],['Caribbean Sea',858,728,23,'#5a8cd8']];
  big.forEach(([t, x, y, size, fill]) => {
    let [px, py] = place(x, y);
    out += `<text class="place" x="${px}" y="${py}" font-size="${size}" fill="${fill}" stroke="#fff" stroke-width="3" stroke-opacity=".6" paint-order="stroke">${t}</text>`;
  });
  return out + '</g>';
}

function drawHeatMap() {
  const heat = {
    yellow: [[600,225,14],[710,280,20],[650,385,12],[770,310,24],[855,300,32],[765,365,48],[565,487,28],[268,425,20],[430,400,8],[760,500,12]],
    orange: [[780,305,14],[855,300,22],[765,365,38],[565,487,16],[268,425,12],[710,280,10]],
    red: [[855,300,14],[765,370,28]]
  };
  let out = svgOpen('gmap', '21 18 1050 711');
  out += baseMap([1, 1, 0, 0], 711, heat) + '</g></svg>';
  document.getElementById('map-heat').innerHTML = out;
}

function drawDotMap() {
  const heat = {
    yellow: [[700,260,35],[770,330,55],[850,300,45],[600,230,20],[600,400,35],[565,487,35],[268,425,22],[430,400,14],[650,440,30]],
    orange: [[770,345,30],[855,295,28],[565,487,18],[268,425,12]],
    red: [[770,350,16],[790,370,12],[860,295,10]]
  };
  const pts = [[120,133],[135,120],[150,115],[158,118],[150,130],[155,135],[130,145],[145,150],[125,162],[135,168],[150,178],[130,188],[122,198],[140,198],[203,170],[180,193],[243,112],[253,128],[235,148],[248,142],[262,148],[275,140],[292,155],[305,175],[327,168],[333,105],[373,97],[378,98],[420,108],[355,145],[385,143],[257,185],[250,225],[282,222],[213,241],[165,255],[157,278],[335,236],[350,262],[362,252],[402,253],[320,284],[340,290],[255,307],[317,347],[470,352],[172,335],[185,335],[157,350],[170,365],[175,375],[203,355],[220,370],[175,390],[216,418],[235,408],[248,410],[238,443],[318,430],[325,428],[333,452],[345,462],[352,458],[363,372],[400,368],[428,375],[428,398],[418,437],[465,153],[455,200],[465,213],[465,240],[457,258],[790,490],[795,525],[800,550],[832,570],[820,515],[537,565],[555,540],[515,95],[520,100],[543,116],[575,100],[628,120],[632,140],[500,145]];
  const rnd = seeded(7741);
  const cloud = (x0, x1, y0, y1, n) => {
    for (let i = 0; i < n; i++) pts.push([x0 + rnd() * (x1 - x0), y0 + rnd() * (y1 - y0)]);
  };
  cloud(490, 780, 130, 240, 65);
  cloud(480, 760, 240, 390, 80);
  cloud(700, 945, 210, 420, 230);
  cloud(470, 780, 390, 500, 80);
  cloud(530, 660, 460, 505, 30);

  let out = svgOpen('gmap', '21 18 1050 636');
  out += baseMap([1.16, 1.19, -75, -90], 636, heat);
  pts.forEach(([x, y]) => {
    if (y < 640) out += `<circle cx="${x}" cy="${y}" r="6.500" fill="#1c2c70" fill-opacity=".4" stroke="#0a1a58" stroke-opacity=".75" stroke-width="3"/>`;
  });
  document.getElementById('map-dots').innerHTML = out + '</g></svg>';
}

drawWind();
drawHeatMap();
drawDotMap();
drawPie();
drawSales();
drawTemp();
```
